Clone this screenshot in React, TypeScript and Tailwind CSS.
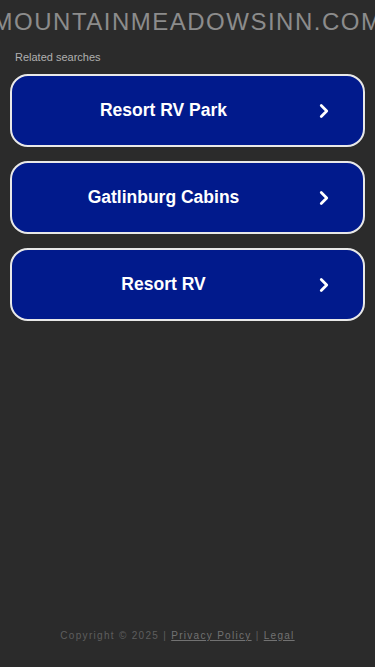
import { ChevronRight } from "lucide-react";

const searches = ["Resort RV Park", "Gatlinburg Cabins", "Resort RV"];

export default function App() {
  return (
    <div className="min-h-[667px] bg-[#2b2b2b] flex flex-col font-['Liberation_Sans',Arial,sans-serif] overflow-hidden">
      {/* domain header */}
      <div className="flex justify-center pt-[8px] h-[44px] overflow-hidden">
        <h1 className="whitespace-nowrap text-[24px] leading-[28px] tracking-[1.5px] text-[#8c8c8c]">
          MOUNTAINMEADOWSINN.COM
        </h1>
      </div>

      <p className="px-[15px] pt-[6px] text-[11px] leading-[14px] text-[#b0b0b0]">Related searches</p>

      <div className="flex flex-col gap-[14px] px-[10px] pt-[10px]">
        {searches.map((s) => (
          <a
            key={s}
            href="#"
            className="flex items-center h-[73px] rounded-[18px] border-2 border-[#e8e8e8] bg-[#011a8c] text-white"
          >
            <span className="flex-1 text-center text-[17.5px] font-bold pl-[2px]">{s}</span>
            <span className="w-[50px] flex justify-start">
              <ChevronRight size={22} strokeWidth={3} />
            </span>
          </a>
        ))}
      </div>

      <div className="flex-1" />

      <footer className="pb-[24px] pr-[20px] text-center text-[10px] tracking-[1.3px] text-[#5e5e5e]">
        Copyright © 2025 | <a href="#" className="underline text-[#727272]">Privacy Policy</a> | <a href="#" className="underline text-[#727272]">Legal</a>
      </footer>
    </div>
  );
}
